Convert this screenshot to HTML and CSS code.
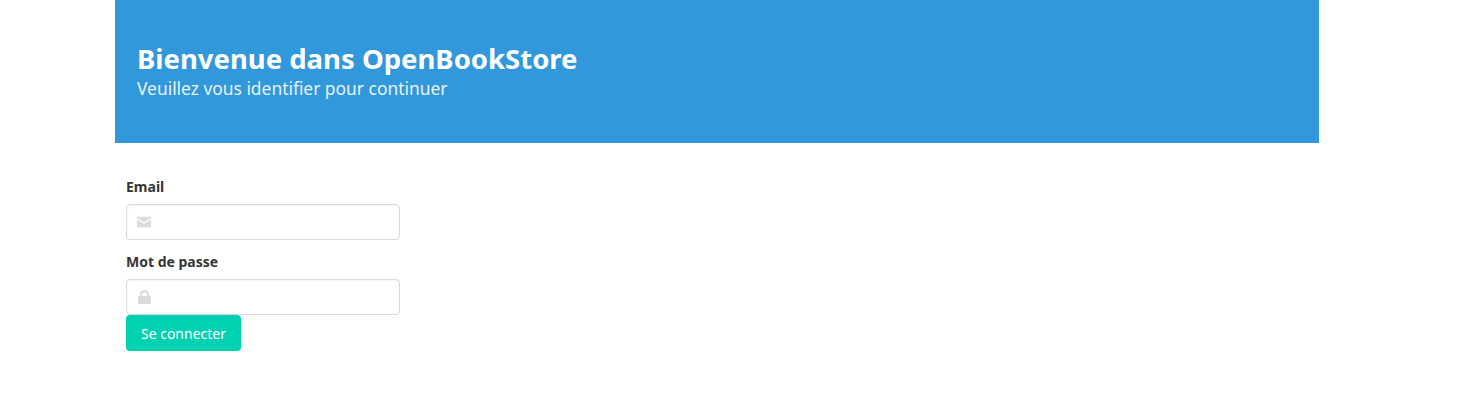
FILE: index.html
```html
<!DOCTYPE html>
<html lang="fr">
<head>
    <meta charset="UTF-8">
    <meta name="viewport" content="width=device-width, initial-scale=1.0">
    <title>OpenBookStore</title>
    <link rel="stylesheet" href="styles.css">
</head>
<body>
    <div class="container">
        <section class="hero">
            <h1 class="title">Bienvenue dans OpenBookStore</h1>
            <h2 class="subtitle">Veuillez vous identifier pour continuer</h2>
        </section>
        <form class="login">
            <div class="field">
                <label class="label" for="email">Email</label>
                <div class="control">
                    <input class="input" id="email" type="email">
                    <svg class="icon" viewBox="0 0 14 11" width="14" height="11">
                        <path fill="#dbdbdb" d="M0 0h14v1.4L7 6 0 1.4zM0 3l7 4.6L14 3v8H0z"/>
                    </svg>
                </div>
            </div>
            <div class="field">
                <label class="label" for="password">Mot de passe</label>
                <div class="control">
                    <input class="input" id="password" type="password">
                    <svg class="icon icon-lock" viewBox="0 0 13 14" width="13" height="14">
                        <path fill="#dbdbdb" d="M2 6V4.5a4.5 4.5 0 0 1 9 0V6h1a1 1 0 0 1 1 1v6a1 1 0 0 1-1 1H1a1 1 0 0 1-1-1V7a1 1 0 0 1 1-1zm2.2 0h4.6V4.5a2.3 2.3 0 0 0-4.6 0z"/>
                    </svg>
                </div>
            </div>
            <button class="button" type="button">Se connecter</button>
        </form>
    </div>
</body>
</html>
```
FILE: styles.css
```css
*{
    box-sizing: border-box;
}
body{
    margin: 0;
    background: #fff;
    color: #363636;
    font-family: "Noto Sans", "Open Sans", sans-serif;
    font-size: 14px;
}
.container{
    width: 1204px;
    margin-left: 115px;
}
.hero{
    height: 143px;
    padding: 43px 22px 0;
    background: #3298dc;
}
.title{
    margin: 0;
    color: #fff;
    font-size: 27.5px;
    font-weight: 700;
    line-height: 32px;
}
.subtitle{
    margin: 0;
    color: #e8f3fb;
    font-size: 17.4px;
    font-weight: 400;
    line-height: 26px;
}
.login{
    width: 296px;
    padding: 33px 11px 0;
}
.field + .field{
    margin-top: 11px;
}
.label{
    display: block;
    height: 28px;
    font-size: 14px;
    font-weight: 700;
    line-height: 22px;
}
.control{
    position: relative;
    height: 36px;
}
.input{
    display: block;
    width: 274px;
    height: 36px;
    padding: 0 36px;
    border: 1px solid #dbdbdb;
    border-radius: 4px;
    background: #fff;
    box-shadow: inset 0 1px 2px rgba(10, 10, 10, 0.05);
}
.icon{
    position: absolute;
    top: 50%;
    left: 11px;
    transform: translateY(-50%);
}
.icon-lock{
    left: 12px;
}
.button{
    display: block;
    width: 115px;
    height: 36px;
    padding: 0;
    border: 0;
    border-radius: 4px;
    background: #00d1b2;
    color: #fff;
    font-family: inherit;
    font-size: 14px;
}
```
